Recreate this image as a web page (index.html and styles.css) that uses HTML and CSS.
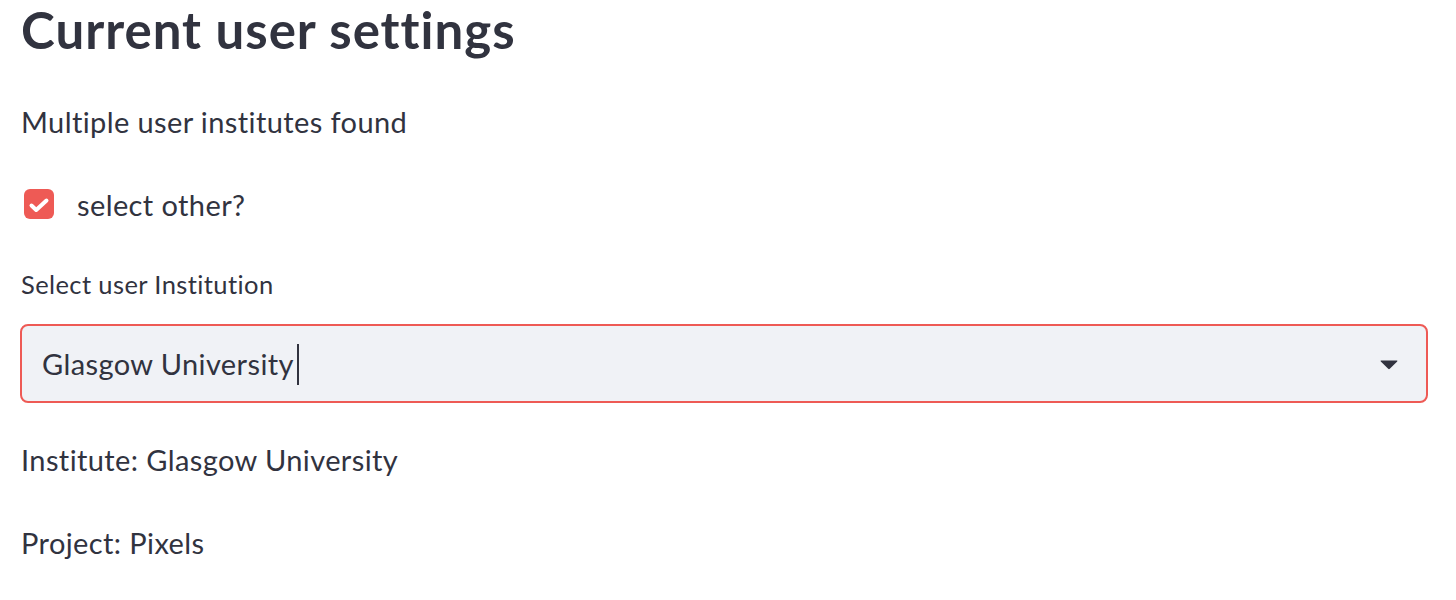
FILE: index.html
```html
<!DOCTYPE html>
<html lang="en">
<head>
<meta charset="utf-8">
<title>Current user settings</title>
<link rel="stylesheet" href="styles.css">
</head>
<body>
<main class="page">
  <h1 class="title">Current user settings</h1>
  <p class="text msg">Multiple user institutes found</p>
  <label class="check-row">
    <span class="checkbox">
      <svg viewBox="0 0 30 30" width="30" height="30" aria-hidden="true">
        <path d="M7.5 16.5 L12.2 21 L22.5 11.5" fill="none" stroke="#fff" stroke-width="4" stroke-linecap="round" stroke-linejoin="round"/>
      </svg>
    </span>
    <span class="text check-label">select other?</span>
  </label>
  <div class="field-label">Select user Institution</div>
  <div class="select">
    <span class="select-value">Glasgow University<span class="caret"></span></span>
    <svg class="arrow" viewBox="0 0 18 10" width="18" height="10" aria-hidden="true">
      <path d="M1.2 0.5 H16.8 Q18 0.5 17.2 1.4 L9.8 8.8 Q9 9.6 8.2 8.8 L0.8 1.4 Q0 0.5 1.2 0.5 Z" fill="#31333f"/>
    </svg>
  </div>
  <p class="text info">Institute: Glasgow University</p>
  <p class="text project">Project: Pixels</p>
</main>
</body>
</html>
```

FILE: styles.css
```css
html, body {
  margin: 0;
  padding: 0;
  background: #ffffff;
}

body {
  font-family: "Lato", "Liberation Sans", sans-serif;
  color: #31333f;
}

.page {
  padding: 0 28px 0 20px;
  display: flex;
  flex-direction: column;
}

.title {
  margin: -1px 0 0 1px;
  font-size: 51px;
  font-weight: 700;
  line-height: 1.2;
  letter-spacing: 1px;
}

.text {
  margin: 0;
  font-size: 29px;
  line-height: 1.2;
  letter-spacing: 0.4px;
}

.msg {
  margin: 45px 0 0 1px;
}

.check-row {
  margin-top: 48px;
  display: flex;
  align-items: flex-start;
  gap: 23px;
  padding-left: 4px;
}

.checkbox {
  width: 30px;
  height: 30px;
  margin-top: 1px;
  border-radius: 6px;
  background: #ee5a55;
  display: flex;
}

.field-label {
  margin: 46px 0 0 1px;
  font-size: 25.5px;
  line-height: 1.2;
  letter-spacing: 0.4px;
}

.select {
  margin-top: 25px;
  height: 79px;
  box-sizing: border-box;
  border: 2px solid #ee5a55;
  border-radius: 8px;
  background: #f0f2f6;
  display: flex;
  align-items: center;
  justify-content: space-between;
  padding: 2px 28px 0 20px;
}

.select-value {
  font-size: 29px;
  line-height: 1.2;
  letter-spacing: 0.4px;
  display: flex;
  align-items: center;
}

.caret {
  display: inline-block;
  width: 2px;
  height: 41px;
  margin-left: 3px;
  background: #31333f;
}

.arrow {
  display: block;
}

.info {
  margin: 40px 0 0 1px;
}

.project {
  margin: 48px 0 0 1px;
}
```
